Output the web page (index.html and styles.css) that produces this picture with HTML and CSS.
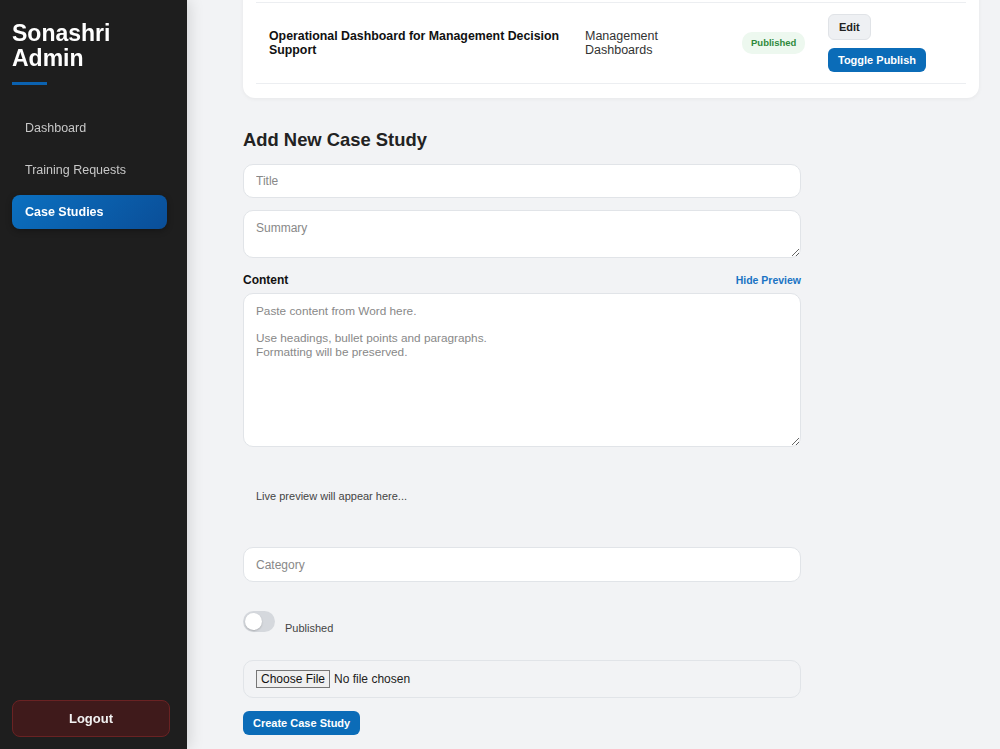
FILE: index.html
```html
<!DOCTYPE html>
<html lang="en">
<head>
    <meta charset="UTF-8">
    <meta name="viewport" content="width=device-width, initial-scale=1.0">
    <title>Case Studies - Sonashri Admin</title>
    <link rel="stylesheet" href="styles.css">
</head>
<body>
    <aside class="sidebar">
        <div class="brand">
            <h1>Sonashri Admin</h1>
            <span class="brand-line"></span>
        </div>
        <nav class="nav">
            <a href="#">Dashboard</a>
            <a href="#">Training Requests</a>
            <a href="#" class="active">Case Studies</a>
        </nav>
        <button class="logout">Logout</button>
    </aside>

    <main class="main">
        <h2 class="page-title">Case Studies</h2>

        <div class="card">
            <table class="table">
                <colgroup>
                    <col class="c-title">
                    <col class="c-cat">
                    <col class="c-status">
                    <col class="c-actions">
                </colgroup>
                <thead>
                    <tr>
                        <th>Title</th>
                        <th>Category</th>
                        <th>Status</th>
                        <th>Actions</th>
                    </tr>
                </thead>
                <tbody>
                    <tr>
                        <td class="t-title">Operational Dashboard for Management Decision Support</td>
                        <td>Management Dashboards</td>
                        <td><span class="pill">Published</span></td>
                        <td class="actions">
                            <button class="btn btn-light">Edit</button>
                            <button class="btn btn-blue">Toggle Publish</button>
                        </td>
                    </tr>
                </tbody>
            </table>
        </div>

        <form class="form">
            <h2 class="form-title">Add New Case Study</h2>
            <input type="text" class="field" placeholder="Title">
            <textarea class="field summary" placeholder="Summary"></textarea>

            <div class="label-row">
                <label>Content</label>
                <a href="#" class="preview-link">Hide Preview</a>
            </div>
            <textarea class="field content" placeholder="Paste content from Word here.

Use headings, bullet points and paragraphs.
Formatting will be preserved."></textarea>

            <div class="preview">Live preview will appear here...</div>

            <input type="text" class="field category" placeholder="Category">

            <label class="switch-row">
                <span class="switch"><span class="knob"></span></span>
                <span class="switch-label">Published</span>
            </label>

            <div class="file-box">
                <input type="file">
            </div>

            <button type="button" class="btn btn-blue create">Create Case Study</button>
        </form>
    </main>

    <script>
        window.scrollTo(0, document.documentElement.scrollHeight);
    </script>
</body>
</html>
```

FILE: styles.css
```css
* {
    margin: 0;
    padding: 0;
    box-sizing: border-box;
}

body {
    font-family: "Liberation Sans", Arial, sans-serif;
    color: #222;
    background: #f2f3f5;
}

a {
    text-decoration: none;
}

/* sidebar */

.sidebar {
    position: fixed;
    top: 0;
    left: 0;
    width: 187px;
    height: 100vh;
    padding: 21px 12px 12px;
    display: flex;
    flex-direction: column;
    background: #1e1e1e;
    box-shadow: 3px 0 14px rgba(0, 0, 0, 0.12);
    z-index: 2;
}

.brand h1 {
    color: #fff;
    font-size: 23px;
    line-height: 25px;
    font-weight: 700;
    width: 120px;
}

.brand-line {
    display: block;
    margin-top: 11px;
    width: 35px;
    height: 3px;
    background: #0b62b0;
}

.nav {
    margin-top: 26px;
    display: flex;
    flex-direction: column;
    gap: 8px;
    width: 155px;
}

.nav a {
    display: block;
    height: 34px;
    line-height: 34px;
    padding: 0 13px;
    font-size: 12.5px;
    color: #c8c8c8;
    border-radius: 8px;
}

.nav a.active {
    color: #fff;
    font-weight: 700;
    background: linear-gradient(135deg, #0b70c0 0%, #0a4e98 100%);
    box-shadow: 0 2px 6px rgba(0, 0, 0, 0.3);
}

.logout {
    margin-top: auto;
    width: 158px;
    height: 37px;
    font-family: inherit;
    font-size: 13px;
    font-weight: 700;
    color: #f2f2f2;
    background: #3f1a1b;
    border: 1px solid #6a2223;
    border-radius: 8px;
}

/* main */

.main {
    margin-left: 187px;
    padding: 30px 21px 14px 56px;
}

.page-title {
    font-size: 22px;
    margin-bottom: 20px;
}

.card {
    background: #fff;
    border-radius: 12px;
    padding: 6px 13px 14px;
    box-shadow: 0 1px 4px rgba(0, 0, 0, 0.05);
}

.table {
    width: 100%;
    border-collapse: collapse;
    table-layout: fixed;
}

.c-title { width: 316px; }
.c-cat { width: 157px; }
.c-status { width: 86px; }

.table th {
    text-align: left;
    font-size: 12px;
    color: #666;
    padding: 12px 13px;
    border-bottom: 1px solid #eceef1;
}

.table td {
    font-size: 12.5px;
    line-height: 14px;
    color: #333;
    padding: 0 13px;
    height: 81px;
    vertical-align: middle;
    border-bottom: 1px solid #eceef1;
}

.table td.t-title {
    font-size: 12.35px;
    font-weight: 700;
    color: #111;
    padding-right: 0;
}

.pill {
    display: inline-block;
    padding: 4px 9px;
    font-size: 9.5px;
    font-weight: 700;
    color: #2f8a3c;
    background: #edf8ef;
    border-radius: 10px;
}

.btn {
    display: block;
    font-family: inherit;
    font-size: 11px;
    font-weight: 700;
    border-radius: 6px;
    cursor: pointer;
}

.btn-light {
    height: 26px;
    padding: 0 10px;
    margin-bottom: 8px;
    color: #222;
    background: #eef0f3;
    border: 1px solid #e0e3e7;
}

.btn-blue {
    height: 24px;
    padding: 0 10px;
    color: #fff;
    background: #0b6cb8;
    border: none;
}

/* form */

.form {
    width: 558px;
    display: flex;
    flex-direction: column;
}

.form-title {
    font-size: 18.4px;
    line-height: 24px;
    color: #222;
    margin: 30px 0 12px;
}

.field {
    display: block;
    width: 100%;
    font-family: inherit;
    font-size: 12px;
    line-height: 16px;
    color: #333;
    background: #fff;
    border: 1px solid #e1e4e8;
    border-radius: 10px;
    padding: 9px 12px;
    outline: none;
}

.field::placeholder {
    color: #888;
}

input.field {
    height: 34px;
}

.summary {
    margin-top: 12px;
    height: 48px;
}

.label-row {
    margin: 14px 0 5px;
    height: 16px;
    display: flex;
    justify-content: space-between;
    align-items: center;
}

.label-row label {
    font-size: 12px;
    font-weight: 700;
    color: #111;
}

.preview-link {
    font-size: 10.5px;
    font-weight: 700;
    color: #1a73c4;
}

.content {
    height: 154px;
    font-size: 11.8px;
    line-height: 13.5px;
    padding-top: 11px;
}

.preview {
    margin-top: 12px;
    padding: 30px 13px;
    font-size: 11px;
    line-height: 14px;
    color: #444;
}

.field.category {
    margin-top: 14px;
    height: 35px;
}

.switch-row {
    margin-top: 29px;
    display: flex;
    align-items: flex-end;
    gap: 10px;
}

.switch {
    width: 32px;
    height: 21px;
    border-radius: 11px;
    background: #d5d8dd;
    display: flex;
    align-items: center;
    padding: 0 2px;
}

.knob {
    width: 17px;
    height: 17px;
    border-radius: 50%;
    background: #fff;
    box-shadow: 0 1px 2px rgba(0, 0, 0, 0.2);
}

.switch-label {
    font-size: 11px;
    color: #444;
    margin-bottom: -2px;
}

.file-box {
    margin-top: 28px;
    height: 38px;
    padding: 0 12px;
    display: flex;
    align-items: center;
    border: 1px solid #e1e4e8;
    border-radius: 10px;
}

.file-box input {
    font-family: "Liberation Sans", Arial, sans-serif;
    font-size: 12px;
    color: #222;
}

.file-box input::file-selector-button {
    font-family: inherit;
    font-size: 12px;
    padding: 1px 4px;
    margin-right: 4px;
    color: #111;
    background: #efefef;
    border: 1px solid #767676;
    border-radius: 0;
}

.create {
    margin-top: 13px;
    align-self: flex-start;
}
```
